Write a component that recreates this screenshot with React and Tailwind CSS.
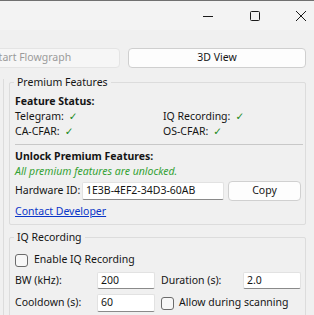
import React from 'react';

const font = { fontFamily: '"Noto Sans", "Open Sans", sans-serif' };

function Check() {
  return <span className="ml-[5px] text-[#1a8a1a]" style={{ fontFamily: '"DejaVu Sans", sans-serif' }}>✓</span>;
}

function GroupBox({ title, className = '', children }) {
  return (
    <div className={`relative border border-[#dcdcdc] rounded-[2px] ${className}`}>
      <span className="absolute -top-[9px] left-[4px] px-[3px] bg-[#f0f0f0] leading-[16px]">{title}</span>
      {children}
    </div>
  );
}

function Field({ value, className = '' }) {
  return (
    <div className={`bg-white border border-[#e2e2e2] border-b-[#8a8a8a] rounded-[2px] pl-[3px] flex items-center ${className}`}>
      {value}
    </div>
  );
}

function Box() {
  return <div className="w-[13px] h-[13px] shrink-0 border border-[#6b6b6b] rounded-[3px] bg-[#f7f7f7]" />;
}

export default function App() {
  return (
    <div className="w-[314px] h-[315px] overflow-hidden bg-[#f0f0f0] text-[10.5px] text-[#151515] whitespace-nowrap" style={font}>
      <div className="h-[30px] bg-[#f3f3f3] border-t border-[#707070] flex items-center justify-end">
        <svg width="12" height="12" viewBox="0 0 12 12" className="mr-[35px]">
          <path d="M1 6.5h10" stroke="#1a1a1a" strokeWidth="1" />
        </svg>
        <svg width="12" height="12" viewBox="0 0 12 12" className="mr-[34px]">
          <rect x="1.5" y="1.5" width="9" height="9" rx="1" fill="none" stroke="#1a1a1a" strokeWidth="1" />
        </svg>
        <svg width="12" height="12" viewBox="0 0 12 12" className="mr-[7px]">
          <path d="M1 1L11 11M11 1L1 11" stroke="#1a1a1a" strokeWidth="1" />
        </svg>
      </div>

      <div className="mt-[18px] flex h-[20px]">
        <div className="-ml-[56px] w-[176px] rounded-[4px] border border-[#e4e4e4] bg-[#f6f6f6] text-[#9b9b9b] flex items-center justify-center">
          Start Flowgraph
        </div>
        <div className="ml-[8px] w-[178px] rounded-[4px] border border-[#cfcfcf] bg-[#fdfdfd] flex items-center justify-center">
          3D View
        </div>
      </div>

      <div className="mt-[11px] ml-[3px] border-l border-[#dcdcdc] pt-[3px] h-[300px]">
        <GroupBox title="Premium Features" className="ml-[5px] w-[297px] pl-[5px] pr-[2px] pt-[11px] pb-[5px]">
          <div className="font-bold leading-[15px] h-[15px]">Feature Status:</div>
          <div className="grid grid-cols-[148px_1fr] leading-[15px]">
            <div className="h-[15px]">Telegram:<Check /></div>
            <div className="h-[15px]">IQ Recording:<Check /></div>
            <div className="h-[15px]">CA-CFAR:<Check /></div>
            <div className="h-[15px]">OS-CFAR:<Check /></div>
          </div>
          <div className="mt-[5px] h-px bg-[#c8c8c8]" />
          <div className="mt-[4px] font-bold leading-[15px] h-[15px]">Unlock Premium Features:</div>
          <div className="italic text-[#34a234] leading-[15px] h-[15px]">All premium features are unlocked.</div>
          <div className="mt-[2px] flex items-center h-[20px]">
            <span className="w-[67px]">Hardware ID:</span>
            <Field value="1E3B-4EF2-34D3-60AB" className="w-[142px] h-[18px]" />
            <div className="ml-[4px] w-[73px] h-[20px] rounded-[4px] border border-[#d0d0d0] bg-[#fdfdfd] flex items-center justify-center">
              Copy
            </div>
          </div>
          <div className="mt-[3px] leading-[15px] h-[15px] text-[#0a36c8] underline">Contact Developer</div>
        </GroupBox>

        <GroupBox title="IQ Recording" className="mt-[12px] ml-[5px] w-[297px] pl-[5px] pr-[3px] pt-[14px] h-[100px]">
          <div className="flex items-center gap-[6px] h-[16px]">
            <Box />
            <span>Enable IQ Recording</span>
          </div>
          <div className="mt-[4px] grid grid-cols-[82px_58px_6px_82px_58px] items-center gap-y-[5px]">
            <span>BW (kHz):</span>
            <Field value="200" className="h-[17px]" />
            <span />
            <span>Duration (s):</span>
            <Field value="2.0" className="h-[17px]" />
            <span>Cooldown (s):</span>
            <Field value="60" className="h-[18px]" />
            <span />
            <div className="col-span-2 flex items-center gap-[5px]">
              <Box />
              <span>Allow during scanning</span>
            </div>
          </div>
        </GroupBox>
      </div>
    </div>
  );
}
